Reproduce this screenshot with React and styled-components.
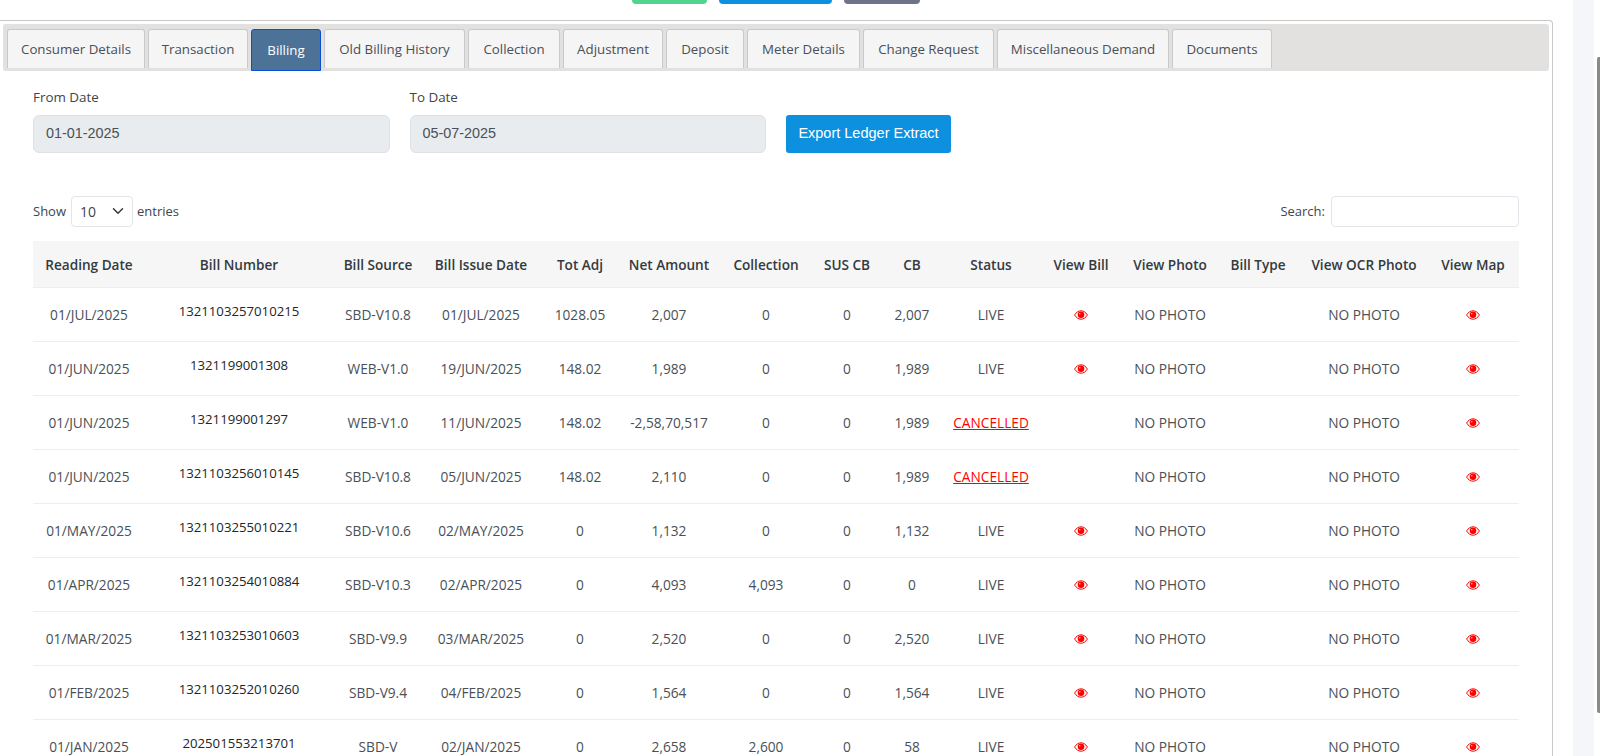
import React from 'react';
import styled, { createGlobalStyle } from 'styled-components';

const GlobalStyle = createGlobalStyle`
  html, body {
    margin: 0;
    padding: 0;
    height: 100%;
    overflow: hidden;
    background: #fff;
  }
  body {
    font-family: 'Open Sans', 'Noto Sans', sans-serif;
    font-size: 14px;
    color: #495057;
  }
`;

const Page = styled.div`
  display: flex;
  height: 756px;
  overflow: hidden;
`;

const Main = styled.div`
  width: 1553px;
  flex: none;
`;

const Gutter = styled.div`
  width: 20px;
  flex: none;
`;

const SideRail = styled.div`
  width: 21px;
  flex: none;
  background: #f5f6fa;
`;

const ScrollTrack = styled.div`
  flex: 1;
  display: flex;
  justify-content: flex-end;
  padding-top: 57px;
  height: 656px;
`;

const ScrollThumb = styled.div`
  width: 3px;
  height: 100%;
  background: #8a8a8a;
  border-radius: 2px 0 0 2px;
`;

const TopActions = styled.div`
  display: flex;
  justify-content: center;
  gap: 12px;
  height: 4px;
  margin-bottom: 16px;
  padding-right: 2px;
`;

const TopButton = styled.div`
  width: ${({ $width }) => $width}px;
  height: 4px;
  background: ${({ $color }) => $color};
  border-radius: 0 0 4px 4px;
`;

const Card = styled.div`
  border-top: 1px solid #c8c8c8;
  border-right: 1px solid #c8c8c8;
  border-top-right-radius: 4px;
  padding: 3px 3px 0;
`;

const TabStrip = styled.div`
  display: flex;
  gap: 3px;
  height: 47px;
  padding: 5px 0 0 4px;
  box-sizing: border-box;
  background: #e3e0e0;
  border-radius: 3px;
`;

const Tab = styled.div`
  box-sizing: border-box;
  flex: none;
  width: ${({ $width }) => $width}px;
  height: ${({ $active }) => ($active ? '42px' : '39px')};
  display: flex;
  align-items: center;
  justify-content: center;
  white-space: nowrap;
  font-size: 13.3px;
  padding-bottom: ${({ $active }) => ($active ? '0' : '1px')};
  color: ${({ $active }) => ($active ? '#fff' : '#495057')};
  background: ${({ $active }) => ($active ? '#4d7298' : '#f5f5f5')};
  border: 1px solid ${({ $active }) => ($active ? '#0b4fd8' : '#c9c9c9')};
  border-bottom: ${({ $active }) => ($active ? '1px solid #0b4fd8' : 'none')};
  border-radius: 3px 3px 0 0;
`;

const FilterRow = styled.div`
  display: flex;
  align-items: flex-end;
  gap: 20px;
  padding: 16px 0 0 30px;
`;

const Field = styled.div`
  width: 356.5px;
`;

const FieldLabel = styled.div`
  font-size: 13.4px;
  line-height: 20px;
  margin-bottom: 8px;
  color: #3f454b;
`;

const DateBox = styled.div`
  box-sizing: border-box;
  height: 38px;
  padding: 0 12px 2px;
  display: flex;
  align-items: center;
  background: #e9ecef;
  border: 1px solid #dee2e6;
  border-radius: 6px;
  font-family: 'Liberation Sans', Arial, sans-serif;
  font-size: 14.4px;
  color: #495057;
`;

const ExportButton = styled.div`
  box-sizing: border-box;
  width: 165px;
  height: 38px;
  display: flex;
  align-items: center;
  justify-content: center;
  padding-bottom: 2px;
  background: #0d90de;
  border-radius: 3px;
  font-family: 'Liberation Sans', Arial, sans-serif;
  font-size: 14.5px;
  color: #fff;
`;

const TableTools = styled.div`
  display: flex;
  justify-content: space-between;
  align-items: center;
  margin: 43px 30px 14px 30px;
  height: 31px;
  font-size: 13px;
  color: #3f454b;
`;

const ToolGroup = styled.div`
  display: flex;
  align-items: center;
  gap: 4px;
  padding-bottom: 1px;
`;

const PageSelect = styled.div`
  box-sizing: border-box;
  width: 62px;
  height: 31px;
  margin-left: 1px;
  padding: 0 8px;
  display: flex;
  align-items: center;
  justify-content: space-between;
  border: 1px solid #e2e5e9;
  border-radius: 4px;
  font-size: 14px;
`;

const SearchBox = styled.div`
  box-sizing: border-box;
  width: 188px;
  height: 31px;
  margin-left: 2px;
  border: 1px solid #e2e5e9;
  border-radius: 4px;
`;

const TableWrap = styled.div`
  margin: 0 33px 0 30px;
`;

const Table = styled.table`
  width: 1486px;
  table-layout: fixed;
  border-collapse: collapse;
  font-size: 13.7px;
`;

const HeadCell = styled.th`
  height: 46px;
  padding: 0;
  background: #f6f6f6;
  font-weight: 600;
  font-size: 13.6px;
  color: #343a40;
  text-align: center;
  white-space: nowrap;
  border-bottom: 1px solid #eeeeee;
`;

const Cell = styled.td`
  box-sizing: border-box;
  height: 54px;
  padding: 0;
  text-align: center;
  white-space: nowrap;
  color: #495057;
  border-bottom: 1px solid #eceef0;
`;

const BillNumber = styled.span`
  display: block;
  padding-bottom: 8px;
  font-size: 13.2px;
  color: #212529;
`;

const Cancelled = styled.a`
  color: #ff0000;
  text-decoration: underline;
`;

const EyeSvg = styled.svg`
  display: block;
  margin: 0 auto;
`;

const colWidths = [112, 188, 90, 116, 82, 96, 98, 64, 66, 92, 88, 90, 86, 126, 92];

const headers = [
  'Reading Date', 'Bill Number', 'Bill Source', 'Bill Issue Date', 'Tot Adj', 'Net Amount', 'Collection',
  'SUS CB', 'CB', 'Status', 'View Bill', 'View Photo', 'Bill Type', 'View OCR Photo', 'View Map',
];

const tabs = [
  ['Consumer Details', 138], ['Transaction', 100], ['Billing', 70], ['Old Billing History', 141],
  ['Collection', 92], ['Adjustment', 100], ['Deposit', 78], ['Meter Details', 113],
  ['Change Request', 131], ['Miscellaneous Demand', 172], ['Documents', 100],
];

const rows = [
  ['01/JUL/2025', '1321103257010215', 'SBD-V10.8', '01/JUL/2025', '1028.05', '2,007', '0', '0', '2,007', 'LIVE'],
  ['01/JUN/2025', '1321199001308', 'WEB-V1.0', '19/JUN/2025', '148.02', '1,989', '0', '0', '1,989', 'LIVE'],
  ['01/JUN/2025', '1321199001297', 'WEB-V1.0', '11/JUN/2025', '148.02', '-2,58,70,517', '0', '0', '1,989', 'CANCELLED'],
  ['01/JUN/2025', '1321103256010145', 'SBD-V10.8', '05/JUN/2025', '148.02', '2,110', '0', '0', '1,989', 'CANCELLED'],
  ['01/MAY/2025', '1321103255010221', 'SBD-V10.6', '02/MAY/2025', '0', '1,132', '0', '0', '1,132', 'LIVE'],
  ['01/APR/2025', '1321103254010884', 'SBD-V10.3', '02/APR/2025', '0', '4,093', '4,093', '0', '0', 'LIVE'],
  ['01/MAR/2025', '1321103253010603', 'SBD-V9.9', '03/MAR/2025', '0', '2,520', '0', '0', '2,520', 'LIVE'],
  ['01/FEB/2025', '1321103252010260', 'SBD-V9.4', '04/FEB/2025', '0', '1,564', '0', '0', '1,564', 'LIVE'],
  ['01/JAN/2025', '202501553213701', 'SBD-V', '02/JAN/2025', '0', '2,658', '2,600', '0', '58', 'LIVE'],
];

function Eye() {
  return (
    <EyeSvg width="14" height="10" viewBox="0 0 14 10">
      <path d="M0.6 5C2.3 2.2 4.5 0.8 7 0.8S11.7 2.2 13.4 5C11.7 7.8 9.5 9.2 7 9.2S2.3 7.8 0.6 5Z" fill="none" stroke="#ff0000" strokeWidth="1" />
      <circle cx="7" cy="4.8" r="3.3" fill="#ff0000" />
      <circle cx="5.8" cy="3.7" r="0.8" fill="#ffb0b0" />
    </EyeSvg>
  );
}

function Chevron() {
  return (
    <svg width="12" height="12" viewBox="0 0 16 16" fill="none" stroke="#343a40" strokeWidth="2" strokeLinecap="round" strokeLinejoin="round">
      <path d="M2 5l6 6 6-6" />
    </svg>
  );
}

function BillRow({ row }) {
  const status = row[9];
  return (
    <tr>
      {row.map((value, i) => {
        if (i === 1) return <Cell key={i}><BillNumber>{value}</BillNumber></Cell>;
        if (i === 9 && value === 'CANCELLED') return <Cell key={i}><Cancelled>{value}</Cancelled></Cell>;
        return <Cell key={i}>{value}</Cell>;
      })}
      <Cell>{status === 'LIVE' && <Eye />}</Cell>
      <Cell>NO PHOTO</Cell>
      <Cell />
      <Cell>NO PHOTO</Cell>
      <Cell><Eye /></Cell>
    </tr>
  );
}

export default function App() {
  return (
    <Page>
      <GlobalStyle />
      <Main>
        <TopActions>
          <TopButton $width={75} $color="#52d48e" />
          <TopButton $width={113} $color="#0d90de" />
          <TopButton $width={76} $color="#6e7387" />
        </TopActions>
        <Card>
          <TabStrip>
            {tabs.map(([label, width]) => (
              <Tab key={label} $active={label === 'Billing'} $width={width}>{label}</Tab>
            ))}
          </TabStrip>
          <FilterRow>
            <Field>
              <FieldLabel>From Date</FieldLabel>
              <DateBox>01-01-2025</DateBox>
            </Field>
            <Field>
              <FieldLabel>To Date</FieldLabel>
              <DateBox>05-07-2025</DateBox>
            </Field>
            <ExportButton>Export Ledger Extract</ExportButton>
          </FilterRow>
          <TableTools>
            <ToolGroup>
              Show
              <PageSelect>10 <Chevron /></PageSelect>
              entries
            </ToolGroup>
            <ToolGroup>
              Search:
              <SearchBox />
            </ToolGroup>
          </TableTools>
          <TableWrap>
            <Table>
              <colgroup>
                {colWidths.map((w, i) => <col key={i} style={{ width: w }} />)}
              </colgroup>
              <thead>
                <tr>
                  {headers.map((h) => <HeadCell key={h}>{h}</HeadCell>)}
                </tr>
              </thead>
              <tbody>
                {rows.map((row, i) => <BillRow key={i} row={row} />)}
              </tbody>
            </Table>
          </TableWrap>
        </Card>
      </Main>
      <Gutter />
      <SideRail />
      <ScrollTrack>
        <ScrollThumb />
      </ScrollTrack>
    </Page>
  );
}
